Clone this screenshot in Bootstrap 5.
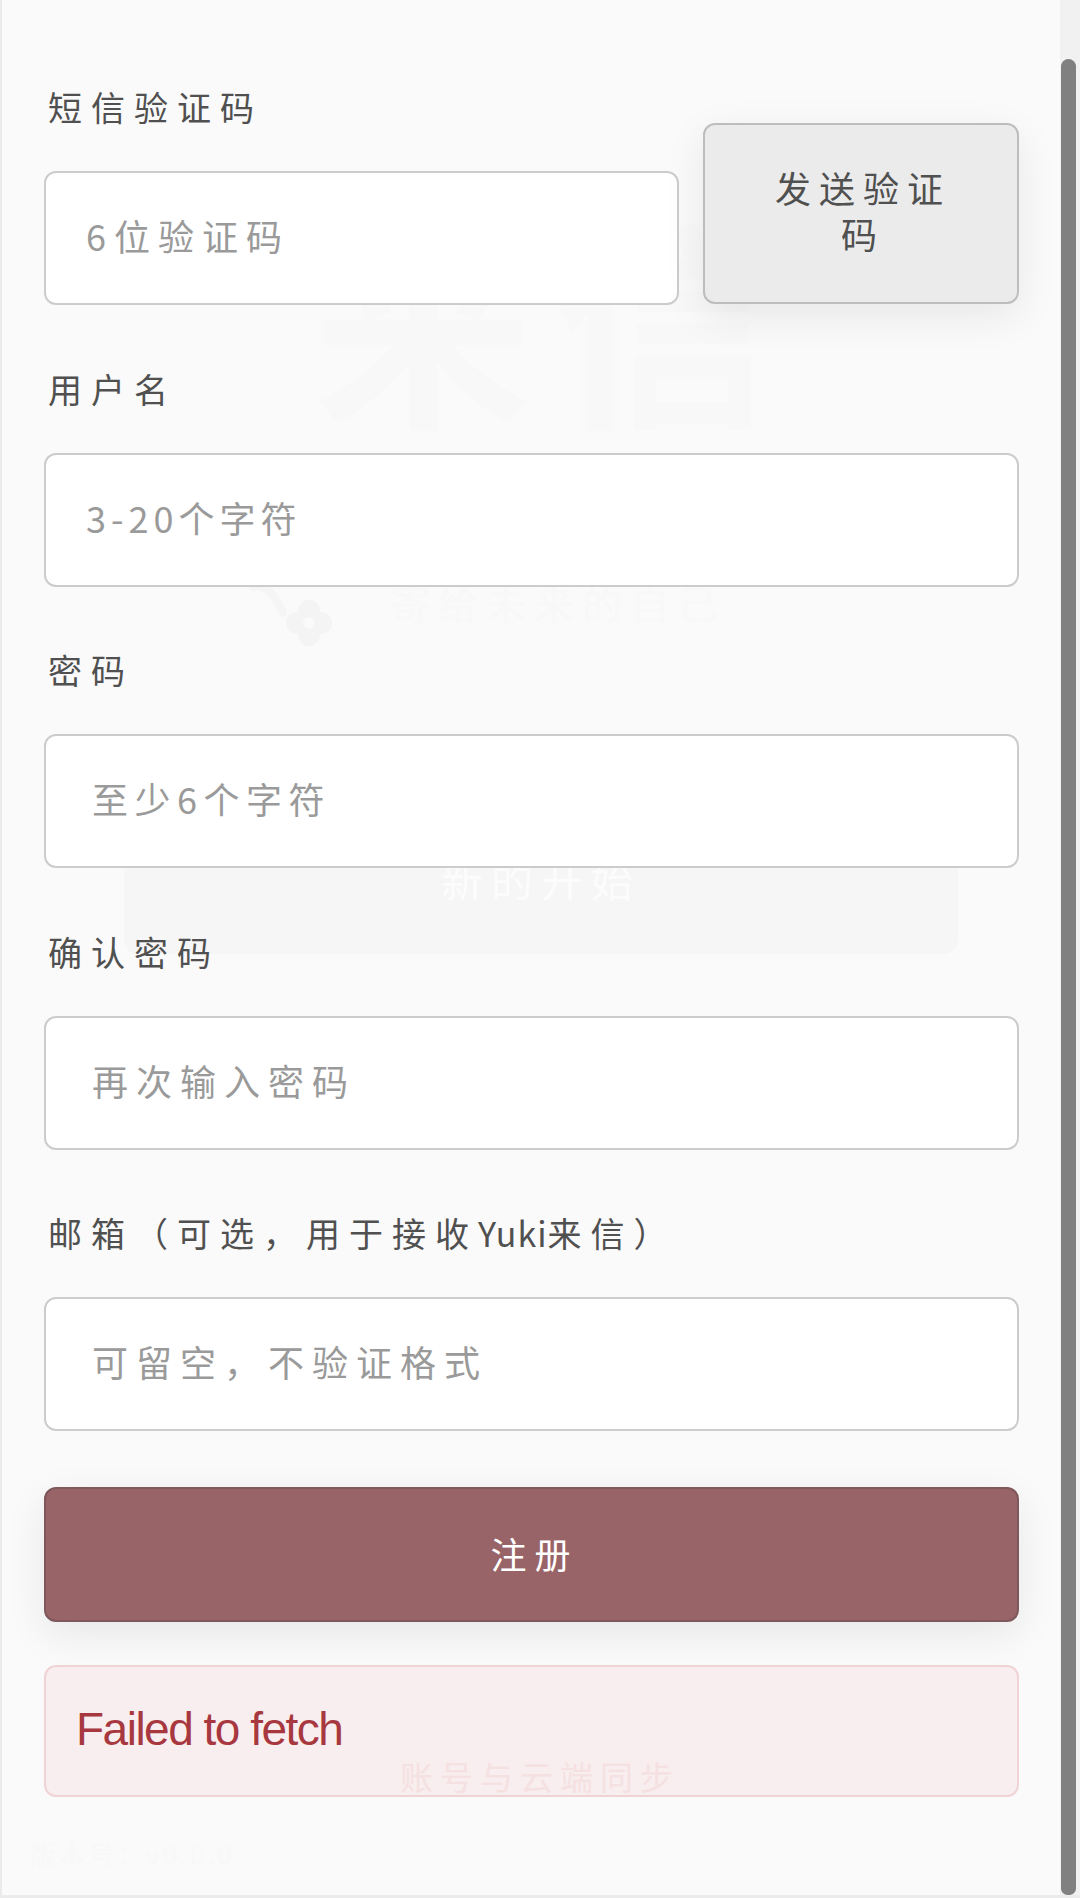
<!DOCTYPE html>
<html lang="zh-CN">
<head>
<meta charset="utf-8">
<title>注册</title>
<link href="https://cdn.jsdelivr.net/npm/bootstrap@5.3.0/dist/css/bootstrap.min.css" rel="stylesheet">
<style>
html,body{height:100%;margin:0;overflow:hidden}
body{background:#ebebeb;font-family:"Noto Sans CJK SC","Liberation Sans",sans-serif;color:#505050}
.shell{height:1895px;padding-left:2px}
.pane{width:1058px;background:#fafafa;padding:82px 41px 0 42px;position:relative}
.sheet{position:relative;z-index:1}
.track{width:20px;background:#f1f1f1;padding:59px 4px 0 1px}
.thumb{background:#808080;border-radius:8px 8px 7px 7px}
.backdrop{position:absolute;inset:0;overflow:hidden;color:#f8f8f8;pointer-events:none}
.ghost-title{font-size:220px;line-height:1;font-weight:700;margin:205px 0 0 311px;letter-spacing:20px;white-space:nowrap}
.ghost-sub{font-size:40px;line-height:44px;margin:155px 0 0 388px;letter-spacing:8px;color:#f8f8f8}
.ghost-flower{margin:-45px 0 0 245px;width:85px;height:70px;display:block}
.ghost-btn{margin:190px 102px 0 122px;height:115px;background:#f6f6f6;border-radius:14px;color:#fcfcfc;font-size:42px;letter-spacing:8px;line-height:60px;text-align:center;padding-top:10px}
.ghost-sync{margin:800px 0 0 398px;font-size:33px;letter-spacing:7px;line-height:44px;color:#f7ecec}
.ghost-ver{margin:38px 0 0 28px;font-size:26px;letter-spacing:3px;line-height:36px;color:#f8f8f8}
.fld-label{font-size:34px;line-height:50px;letter-spacing:9px;margin:0 0 39px 4px;color:#505050;display:block}
.latin-run{letter-spacing:1px}
.fld-group{margin-bottom:58.5px}
.fld-input.form-control{height:134px;border:2.5px solid #cccccc;border-radius:12px;background:#fff;font-size:36px;letter-spacing:8px;padding:0 0 6px 40px;box-shadow:none}
.fld-input.form-control::placeholder{color:#9a9a9a;opacity:1}
.fld-input.inset-more.form-control{padding-left:46px}
.fld-input.tight-a.form-control{letter-spacing:5px}
.fld-input.tight-b.form-control{letter-spacing:6.5px}
.code-row{gap:24px}
.code-col{width:635px;flex:none}
.code-send.btn{width:316px;flex:none;height:181px;margin-bottom:1px;background:#ebebeb;border:2.5px solid #bdbdbd;border-radius:12px;color:#505050;font-size:36px;letter-spacing:8px;line-height:46px;padding:0 66px 7px 70px;box-shadow:0 12px 40px rgba(0,0,0,.08);--bs-btn-hover-bg:#ebebeb}
.sign-up.btn{height:135px;background:#986468;border:2px solid #7e585b;border-radius:12px;color:#fff;font-size:36px;letter-spacing:8px;margin-top:-2.5px;padding:0 0 4px 6px;box-shadow:0 12px 40px rgba(0,0,0,.08)}
.fail-note.alert{height:132px;margin:43px 0 0;padding:0 0 4px 30px;background:rgba(220,53,69,.06);border:2.5px solid #efd3d5;border-radius:12px;color:#a8383f;font-family:"Liberation Sans",sans-serif;font-size:46px;letter-spacing:-1.5px;line-height:1}
</style>
</head>
<body>
<div class="shell d-flex">
  <div class="pane flex-shrink-0">
    <div class="backdrop" aria-hidden="true">
      <div class="ghost-title">来信</div>
      <div class="ghost-sub">寄给未来的自己</div>
      <svg class="ghost-flower" viewBox="0 0 85 70"><path d="M6 8C20 4 30 20 36 34" fill="none" stroke="#f5f5f5" stroke-width="8" stroke-linecap="round"/><g fill="#f4f4f4"><circle cx="62" cy="32" r="11"/><circle cx="74" cy="44" r="11"/><circle cx="62" cy="56" r="11"/><circle cx="50" cy="44" r="11"/></g><circle cx="62" cy="44" r="6" fill="#fafafa"/></svg>
      <div class="ghost-btn">新的开始</div>
      <div class="ghost-sync">账号与云端同步</div>
      <div class="ghost-ver">版本号：v0.0.0</div>
    </div>
    <form class="sheet">
      <div class="fld-group code-row d-flex align-items-end">
        <div class="code-col">
          <label class="fld-label" for="f1">短信验证码</label>
          <input id="f1" class="form-control fld-input" placeholder="6位验证码">
        </div>
        <button type="button" class="btn code-send">发送验证码</button>
      </div>
      <div class="fld-group">
        <label class="fld-label" for="f2">用户名</label>
        <input id="f2" class="form-control fld-input tight-a" placeholder="3-20个字符">
      </div>
      <div class="fld-group">
        <label class="fld-label" for="f3">密码</label>
        <input id="f3" class="form-control fld-input inset-more tight-b" placeholder="至少6个字符">
      </div>
      <div class="fld-group">
        <label class="fld-label" for="f4">确认密码</label>
        <input id="f4" class="form-control fld-input inset-more" placeholder="再次输入密码">
      </div>
      <div class="fld-group">
        <label class="fld-label" for="f5">邮箱（可选，用于接收<span class="latin-run">Yuki</span>来信）</label>
        <input id="f5" class="form-control fld-input inset-more" placeholder="可留空，不验证格式">
      </div>
      <button type="button" class="btn sign-up w-100">注册</button>
      <div class="alert fail-note d-flex align-items-center" role="alert">Failed to fetch</div>
    </form>
  </div>
  <div class="track d-flex flex-column flex-shrink-0"><div class="thumb flex-grow-1"></div></div>
</div>
<script src="https://cdn.jsdelivr.net/npm/bootstrap@5.3.0/dist/js/bootstrap.bundle.min.js"></script>
</body>
</html>
